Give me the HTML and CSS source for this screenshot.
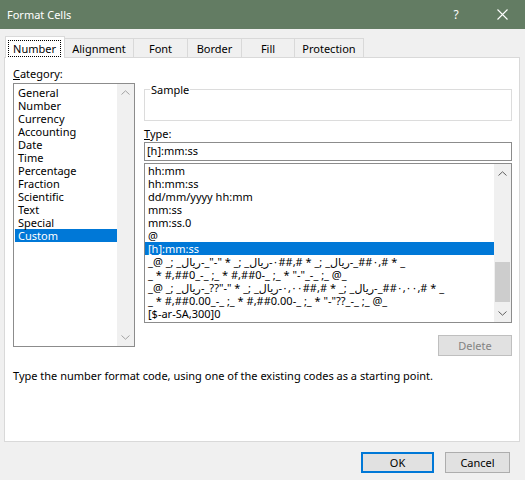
FILE: index.html
```html
<!DOCTYPE html>
<html lang="en">
<head>
<meta charset="utf-8">
<title>Format Cells</title>
<link rel="stylesheet" href="styles.css">
</head>
<body>
<div class="window">
  <div class="titlebar">
    <span class="title">Format Cells</span>
    <div class="tb-buttons">
      <span class="tb-help">?</span>
      <span class="tb-close">
        <svg width="11" height="11" viewBox="0 0 11 11"><path d="M0.5 0.5 L10.5 10.5 M10.5 0.5 L0.5 10.5" stroke="#fff" stroke-width="1.1" fill="none"/></svg>
      </span>
    </div>
  </div>

  <div class="tabs">
    <div class="tab active w-number"><span class="focus">Number</span></div>
    <div class="tab w-align">Alignment</div>
    <div class="tab w-font">Font</div>
    <div class="tab w-border">Border</div>
    <div class="tab w-fill">Fill</div>
    <div class="tab w-protect">Protection</div>
  </div>

  <div class="panel">
    <div class="main">
      <div class="left">
        <div class="label"><u>C</u>ategory:</div>
        <div class="listbox cat">
          <ul class="items">
            <li>General</li>
            <li>Number</li>
            <li>Currency</li>
            <li>Accounting</li>
            <li>Date</li>
            <li>Time</li>
            <li>Percentage</li>
            <li>Fraction</li>
            <li>Scientific</li>
            <li>Text</li>
            <li>Special</li>
            <li class="sel">Custom</li>
          </ul>
          <div class="vscroll disabled">
            <svg class="chev" width="9" height="5" viewBox="0 0 9 5"><polyline points="0.5,4.5 4.5,0.8 8.5,4.5" fill="none" stroke="currentColor" stroke-width="1"/></svg>
            <div class="track"></div>
            <svg class="chev" width="9" height="5" viewBox="0 0 9 5"><polyline points="0.5,0.5 4.5,4.2 8.5,0.5" fill="none" stroke="currentColor" stroke-width="1"/></svg>
          </div>
        </div>
      </div>

      <div class="right">
        <fieldset class="sample">
          <legend>Sample</legend>
          <div class="sample-body"></div>
        </fieldset>
        <div class="label type-label"><u>T</u>ype:</div>
        <div class="input">[h]:mm:ss</div>
        <div class="listbox types">
          <ul class="items">
            <li>hh:mm</li>
            <li>hh:mm:ss</li>
            <li>dd/mm/yyyy hh:mm</li>
            <li>mm:ss</li>
            <li>mm:ss.0</li>
            <li>@</li>
            <li class="sel">[h]:mm:ss</li>
            <li>_@ _; _<bdi>ريال</bdi>-_"-" * _; _<bdi>ريال</bdi>-<bdi>٠</bdi>##,# * _; _<bdi>ريال</bdi>-_##<bdi>٠</bdi>,# * _</li>
            <li>_ * #,##0_-_ ;_ * #,##0-_ ;_ * "-"_-_ ;_ @_</li>
            <li>_@ _; _<bdi>ريال</bdi>-_??"-" * _; _<bdi>ريال</bdi>-<bdi>٠,٠٠</bdi>##,# * _; _<bdi>ريال</bdi>-_##<bdi>٠,٠٠</bdi>,# * _</li>
            <li>_ * #,##0.00_-_ ;_ * #,##0.00-_ ;_ * "-"??_-_ ;_ @_</li>
            <li>[$-ar-SA,300]0</li>
          </ul>
          <div class="vscroll">
            <svg class="chev" width="9" height="5" viewBox="0 0 9 5"><polyline points="0.5,4.5 4.5,0.8 8.5,4.5" fill="none" stroke="currentColor" stroke-width="1"/></svg>
            <div class="track"><div class="thumb"></div></div>
            <svg class="chev" width="9" height="5" viewBox="0 0 9 5"><polyline points="0.5,0.5 4.5,4.2 8.5,0.5" fill="none" stroke="currentColor" stroke-width="1"/></svg>
          </div>
        </div>
        <div class="delete-row"><button class="btn btn-delete" disabled>Delete</button></div>
      </div>
    </div>
    <p class="desc">Type the number format code, using one of the existing codes as a starting point.</p>
  </div>

  <div class="footer">
    <button class="btn btn-ok">OK</button>
    <button class="btn btn-cancel">Cancel</button>
  </div>
</div>
</body>
</html>
```
FILE: styles.css
```css
* { box-sizing: border-box; }

html, body {
  margin: 0;
  padding: 0;
  background: #f0f0f0;
}

body {
  font-family: "Noto Sans", "DejaVu Sans", sans-serif;
  font-size: 11px;
  color: #000;
}

.window {
  width: 525px;
  height: 480px;
  background: #f0f0f0;
  overflow: hidden;
}

/* Title bar */
.titlebar {
  height: 29px;
  background: #637c63;
  display: flex;
  align-items: center;
  justify-content: space-between;
  padding-left: 7px;
  color: #fff;
}
.title {
  font-size: 11px;
  line-height: 16px;
}
.tb-buttons {
  display: flex;
  align-items: center;
  height: 100%;
}
.tb-help {
  width: 46px;
  text-align: center;
  font-size: 12px;
  line-height: 16px;
}
.tb-close {
  width: 46px;
  height: 29px;
  display: flex;
  align-items: center;
  justify-content: center;
}

/* Tabs */
.tabs {
  margin-top: 7px;
  height: 21px;
  padding-left: 5px;
  display: flex;
  align-items: flex-end;
}
.tab {
  height: 19px;
  border: 1px solid #d9d9d9;
  border-bottom: none;
  background: #f0f0f0;
  margin-left: -1px;
  display: flex;
  align-items: center;
  justify-content: center;
  line-height: 15px;
  padding-top: 1px;
}
.tab.active {
  margin-left: 0;
  height: 22px;
  margin-bottom: -1px;
  background: #fff;
  position: relative;
  z-index: 2;
  display: block;
  padding: 3px 3px 0 2px;
}
.focus {
  display: block;
  height: 17px;
  border: 1px dotted #000;
  text-align: center;
  line-height: 15px;
}
.w-number { width: 60px; }
.w-align { width: 70px; }
.w-font { width: 55px; }
.w-border { width: 55px; }
.w-fill { width: 54px; }
.w-protect { width: 70px; }

/* Panel */
.panel {
  margin-left: 4px;
  width: 516px;
  height: 385px;
  background: #fff;
  border: 1px solid #d9d9d9;
  padding: 9px 6px 0 8px;
}
.main {
  display: flex;
  align-items: flex-start;
}
.label {
  height: 13px;
  line-height: 13px;
  white-space: nowrap;
}
.label u { text-decoration: underline; text-underline-offset: 1px; }

.left {
  width: 122px;
}
.right {
  width: 368px;
  margin-left: 9px;
}

/* Listboxes */
.listbox {
  border: 1px solid #8c8c8c;
  background: #fff;
  display: flex;
}
.listbox.cat {
  margin-top: 3px;
  height: 264px;
  padding: 2px 0 0 1px;
}
.items {
  list-style: none;
  margin: 0;
  padding: 0;
  flex: 1;
  min-width: 0;
  overflow: hidden;
}
.items li {
  height: 13px;
  line-height: 13px;
  white-space: pre;
  padding-left: 2px;
}
.cat .items li { padding-left: 3px; }
.items li.sel {
  background: #0078d7;
  color: #fff;
}
.vscroll {
  width: 17px;
  background: #f0f0f0;
  display: flex;
  flex-direction: column;
  align-items: center;
  color: #606060;
}
.cat .vscroll {
  margin-top: -2px;
  color: #a3a3a3;
}
.chev {
  display: block;
  margin: 6px 0;
}
.track {
  flex: 1;
  width: 100%;
  display: flex;
  flex-direction: column;
  justify-content: flex-end;
}
.thumb {
  height: 40px;
  margin: 0 1px 2px 1px;
  background: #cdcdcd;
}

/* Right column */
.sample {
  margin: 16px 0 0 0;
  padding: 0 5px;
  border: 1px solid #dcdcdc;
  min-width: 0;
}
.sample legend {
  padding: 0 1px;
  line-height: 13px;
  font-size: 11px;
}
.sample-body {
  height: 24px;
}
.type-label {
  margin-top: 6px;
}
.input {
  margin-top: 2px;
  height: 19px;
  border: 1px solid #8c8c8c;
  padding-left: 2px;
  line-height: 16px;
}
.listbox.types {
  margin-top: 2px;
  height: 160px;
}
.types .items li {
  padding-left: 3px;
}
.types .chev { margin: 7px 0 6px; }

.delete-row {
  display: flex;
  justify-content: flex-end;
  margin-top: 12px;
}

/* Buttons */
.btn {
  font-family: "Noto Sans", "DejaVu Sans", sans-serif;
  font-size: 11px;
  height: 21px;
  border: 1px solid #adadad;
  background: #e1e1e1;
  color: #000;
  padding: 0;
  line-height: 17px;
}
.btn-delete {
  width: 74px;
  background: #e1e1e1;
  border-color: #bfbfbf;
  color: #838383;
}

.desc {
  margin: 13px 0 0 0;
  line-height: 13px;
  white-space: nowrap;
}

.footer {
  display: flex;
  justify-content: flex-end;
  margin-top: 10px;
  padding-right: 15px;
  gap: 11px;
}
.btn-ok {
  width: 73px;
  border: 2px solid #0078d7;
}
.btn-cancel {
  width: 65px;
}
```
